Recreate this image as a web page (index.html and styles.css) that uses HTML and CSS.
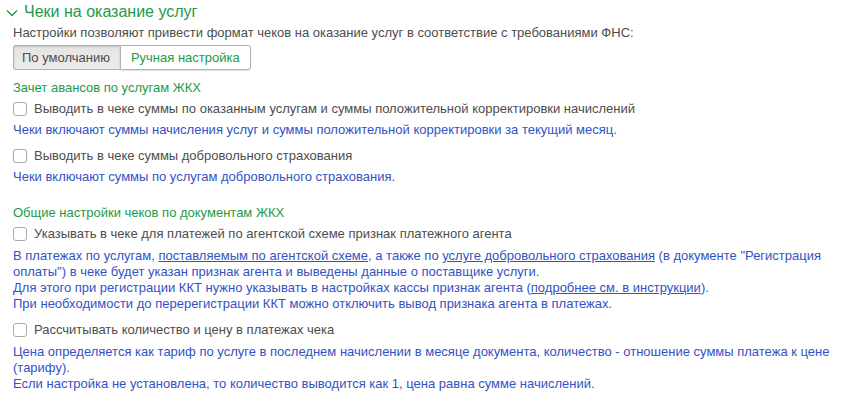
FILE: index.html
```html
<!DOCTYPE html>
<html lang="ru">
<head>
    <meta charset="UTF-8">
    <title>Чеки на оказание услуг</title>
    <link rel="stylesheet" href="styles.css">
</head>
<body>
    <div class="group">
        <div class="group-title">
            <svg class="chevron" width="12" height="8" viewBox="0 0 12 8"><path d="M1 1.5 L6 6.5 L11 1.5" fill="none" stroke="#1d9a48" stroke-width="1.4"/></svg>
            <span>Чеки на оказание услуг</span>
        </div>
        <div class="group-body">
            <p class="note">Настройки позволяют привести формат чеков на оказание услуг в соответствие с требованиями ФНС:</p>
            <div class="switch">
                <button class="switch-btn active">По умолчанию</button>
                <button class="switch-btn">Ручная настройка</button>
            </div>

            <div class="subtitle first">Зачет авансов по услугам ЖКХ</div>
            <label class="check"><span class="box"></span>Выводить в чеке суммы по оказанным услугам и суммы положительной корректировки начислений</label>
            <p class="hint">Чеки включают суммы начисления услуг и суммы положительной корректировки за текущий месяц.</p>
            <label class="check"><span class="box"></span>Выводить в чеке суммы добровольного страхования</label>
            <p class="hint">Чеки включают суммы по услугам добровольного страхования.</p>

            <div class="subtitle">Общие настройки чеков по документам ЖКХ</div>
            <label class="check"><span class="box"></span>Указывать в чеке для платежей по агентской схеме признак платежного агента</label>
            <p class="hint tight">В платежах по услугам, <a href="#">поставляемым по агентской схеме</a>, а также по <a href="#">услуге добровольного страхования</a> (в документе "Регистрация оплаты") в чеке будет указан признак агента и выведены данные о поставщике услуги.<br>Для этого при регистрации ККТ нужно указывать в настройках кассы признак агента (<a href="#">подробнее см. в инструкции</a>).<br>При необходимости до перерегистрации ККТ можно отключить вывод признака агента в платежах.</p>
            <label class="check"><span class="box"></span>Рассчитывать количество и цену в платежах чека</label>
            <p class="hint tight">Цена определяется как тариф по услуге в последнем начислении в месяце документа, количество - отношение суммы платежа к цене (тарифу).<br>Если настройка не установлена, то количество выводится как 1, цена равна сумме начислений.</p>
        </div>
    </div>
</body>
</html>
```

FILE: styles.css
```css
body {
    margin: 0;
    background: #fff;
    font-family: Arial, "Liberation Sans", sans-serif;
    font-size: 13px;
    color: #4d4d4d;
}

.group {
    padding: 2px 0 0 6px;
}

.group-title {
    display: flex;
    align-items: center;
    gap: 6px;
    height: 20px;
    font-size: 16px;
    color: #1d9a48;
}

.chevron {
    margin-top: 2px;
}

.group-body {
    padding-left: 7px;
    padding-right: 10px;
}

.note {
    margin: 3px 0 0;
    line-height: 16px;
}

.switch {
    display: flex;
    margin-top: 4px;
    width: max-content;
}

.switch-btn {
    font-family: inherit;
    font-size: 13px;
    height: 25px;
    padding: 0 10px;
    border: 1px solid #b3b3b3;
    background: #fff;
    color: #1d9a48;
    border-radius: 0 3px 3px 0;
    box-shadow: 0 1px 1px rgba(0, 0, 0, 0.12);
}

.switch-btn.active {
    color: #4d4d4d;
    background: linear-gradient(#e4e4e4, #ececec);
    border-radius: 3px 0 0 3px;
    border-right: none;
    padding: 0 10px 0 8px;
    box-shadow: inset 0 1px 2px rgba(0, 0, 0, 0.15);
}

.subtitle {
    margin-top: 20px;
    color: #1d9a48;
    line-height: 16px;
}

.subtitle.first {
    margin-top: 10px;
}

.check {
    display: flex;
    align-items: center;
    gap: 7px;
    margin-top: 4px;
    line-height: 18px;
}

.hint + .check {
    margin-top: 9px;
}

.box {
    width: 12px;
    height: 12px;
    border: 1px solid #a9a9a9;
    border-radius: 3px;
    background: #fff;
    flex-shrink: 0;
}

.hint {
    margin: 4px 0 0;
    color: #3352c4;
    line-height: 16px;
}

.hint.tight {
    margin-top: 5px;
}

.hint a {
    color: #3352c4;
    text-decoration: underline;
    text-underline-offset: 1px;
}
```
